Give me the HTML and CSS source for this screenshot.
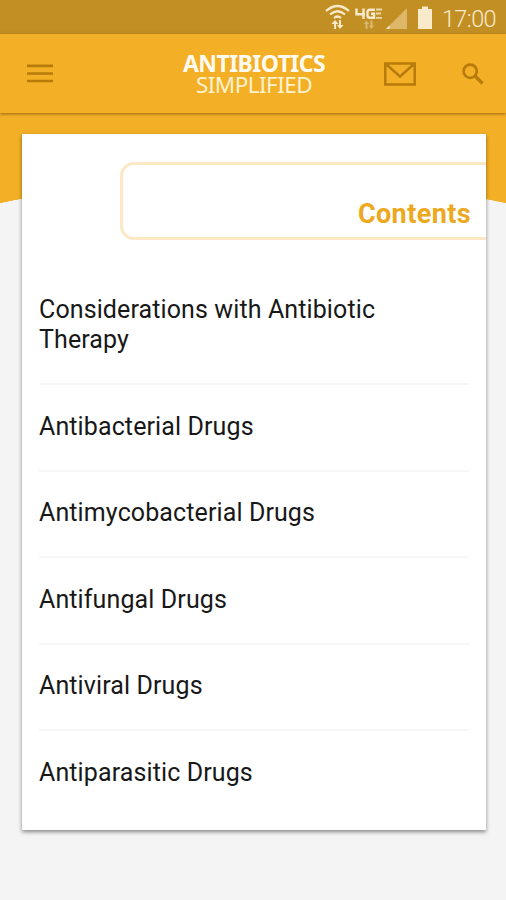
FILE: index.html
```html
<!DOCTYPE html>
<html lang="en">
<head>
<meta charset="utf-8">
<title>Antibiotics Simplified</title>
<link rel="stylesheet" href="styles.css">
</head>
<body>
<div class="status">
  <svg class="signals" width="110" height="34" viewBox="0 0 110 34">
    <g fill="none" stroke="#f8eacb" stroke-width="2.2">
      <path d="M1 11Q12.500 1 24 11"/>
      <path d="M5 14.500Q12.500 8 20 14.500"/>
      <path d="M9 18Q12.500 15 16 18"/>
    </g>
    <path d="M10 20l3.500 4h-2.400v5h-2v-5h-2.600zM14 20h2v5h2.600l-3.600 4-3-4h2z" fill="#f8eacb"/>
    <g fill="none" stroke="#f8eacb" stroke-width="2.400">
      <path d="M31.500 8.500V14.300H40M38.500 8.500V19"/>
      <path d="M50 9.700H45Q42.500 9.700 42.500 12V15.500Q42.500 17.800 45 17.800H49V13.800H46"/>
      <path d="M51 9.500H57M51 13.500H56M51 17.800H57" stroke-width="1.800" opacity=".8"/>
    </g>
    <path d="M41.500 20.500l2.700 3.500h-1.700v5h-2v-5h-1.700zM45.500 20.500h2v5h1.700l-2.700 3.500-2.700-3.500h1.700z" fill="#f8eacb" opacity=".45"/>
    <path d="M61 29L82 8V29z" fill="#dfb768"/>
    <path d="M61 29l3.500-3.500V29z" fill="#f8eacb"/>
    <path d="M93 9h4V6.500h6V9h4v20H93z" fill="#f8eacb"/>
  </svg>
  <span class="clock">17:00</span>
</div>
<header class="bar">
  <svg class="menu" width="28" height="20" viewBox="0 0 28 20">
    <path d="M1 1.800H27M1 9.500H27M1 17H27" fill="none" stroke="#b77b0b" stroke-width="2.700"/>
  </svg>
  <h1 class="brand"><span class="strong">ANTIBIOTICS</span><span class="light">SIMPLIFIED</span></h1>
  <svg class="mail" width="32" height="24" viewBox="0 0 32 24">
    <path d="M1.300 1.500H30.700V22.500H1.300zM2 2L16 14.500 30 2" fill="none" stroke="#b77b0b" stroke-width="2.500"/>
  </svg>
  <svg class="search" width="22" height="22" viewBox="0 0 22 22">
    <circle cx="8.200" cy="8.200" r="6.600" fill="none" stroke="#b77b0b" stroke-width="2.700"/>
    <path d="M13 13L20.500 20.500" stroke="#b77b0b" stroke-width="3.200"/>
  </svg>
</header>
<main class="page">
  <section class="card">
    <div class="heading"><h2>Contents</h2></div>
    <ul class="list">
      <li>Considerations with Antibiotic Therapy</li>
      <li>Antibacterial Drugs</li>
      <li>Antimycobacterial Drugs</li>
      <li>Antifungal Drugs</li>
      <li>Antiviral Drugs</li>
      <li>Antiparasitic Drugs</li>
    </ul>
  </section>
</main>
</body>
</html>
```
FILE: styles.css
```css
* { box-sizing: border-box; }
body {
  margin: 0;
  height: 900px;
  overflow: hidden;
  background: #f4f4f4;
  font-family: Roboto, "Liberation Sans", sans-serif;
}
.status {
  height: 34px;
  padding-right: 10px;
  display: flex;
  justify-content: flex-end;
  align-items: center;
  background: #c28f24;
}
.signals { margin-right: 7px; }
.clock {
  color: #f8eacb;
  font-size: 23.500px;
  font-weight: 300;
  letter-spacing: -.6px;
  line-height: 34px;
  padding-top: 3px;
}
.bar {
  position: relative;
  height: 79px;
  padding: 0 22px 0 26px;
  display: flex;
  align-items: center;
  background: #f3b027;
  box-shadow: 0 1px 3px rgba(110, 70, 0, .7);
}
.brand {
  width: 160px;
  margin: 0 0 0 120px;
  display: flex;
  flex-direction: column;
  align-items: center;
  color: #fffaf0;
  font-family: "Noto Sans", sans-serif;
  font-size: 23px;
  line-height: 21px;
  letter-spacing: -.55px;
}
.strong { font-weight: 700; }
.light { font-weight: 400; font-size: 22.500px; color: #fff2cf; }
.mail { margin-left: 50px; }
.search { margin-left: auto; }
.page {
  height: 787px;
  padding: 21px 20px 0 22px;
  background: radial-gradient(ellipse 500px 181px at 50% 246px, #f4f4f4 99.700%, #f3b027 100%) 0 0 / 100% 110px no-repeat;
}
.card {
  height: 696px;
  padding-top: 28px;
  overflow: hidden;
  background: #fff;
  box-shadow: 0 2px 4px rgba(0, 0, 0, .45);
}
.heading {
  height: 78px;
  margin-left: 98px;
  padding: 0 15px 8px 0;
  display: flex;
  justify-content: flex-end;
  align-items: flex-end;
  border: 3px solid #fde8c5;
  border-right: 0;
  border-radius: 14px 0 0 14px;
}
h2 {
  margin: 0;
  color: #eca920;
  font-size: 27px;
  line-height: 30px;
  font-weight: 700;
  letter-spacing: .4px;
}
.list { margin: 26px 17px 0; padding: 0; list-style: none; }
.list li {
  height: 86.500px;
  padding: 0 60px 2px 0;
  display: flex;
  align-items: center;
  border-bottom: 2px solid #f6f6f6;
  color: #181818;
  font-size: 25px;
  line-height: 29.500px;
  letter-spacing: .11px;
}
.list li:first-child { height: 119px; padding-bottom: 0; }
.list li:last-child { border-bottom: 0; padding-bottom: 4px; }
```
